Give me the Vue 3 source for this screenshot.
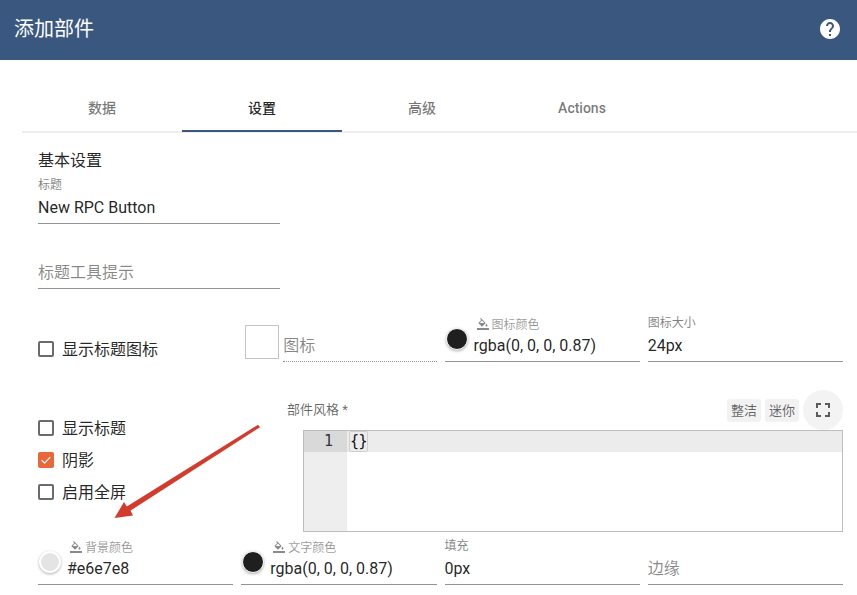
<script setup>
const fillPath = 'M16.56 8.94L7.62 0 6.21 1.41l2.38 2.38-5.15 5.15c-.59.59-.59 1.54 0 2.12l5.5 5.5c.29.29.68.44 1.06.44s.77-.15 1.06-.44l5.5-5.5c.59-.58.59-1.53 0-2.12zM5.21 10L10 5.21 14.79 10H5.21zM19 11.5s-2 2.17-2 3.5c0 1.1.9 2 2 2s2-.9 2-2c0-1.33-2-3.5-2-3.5zM0 20h24v4H0z'
const tabs = ['数据', '设置', '高级', 'Actions']
const checks = [
  { text: '显示标题', on: false },
  { text: '阴影', on: true },
  { text: '启用全屏', on: false }
]
</script>

<template>
  <div class="page">
    <header class="bar">
      <h1>添加部件</h1>
      <svg class="help" viewBox="0 0 24 24" width="24" height="24"><path fill="#fff" d="M12 2C6.48 2 2 6.48 2 12s4.48 10 10 10 10-4.48 10-10S17.52 2 12 2zm1 17h-2v-2h2v2zm2.07-7.75l-.9.92C13.45 12.9 13 13.5 13 15h-2v-.5c0-1.1.45-2.1 1.17-2.83l1.24-1.26c.37-.36.59-.86.59-1.41 0-1.1-.9-2-2-2s-2 .9-2 2H8c0-2.21 1.79-4 4-4s4 1.79 4 4c0 .88-.36 1.68-.93 2.25z"/></svg>
    </header>

    <nav class="tabs">
      <div v-for="(t, i) in tabs" :key="t" class="tab" :class="{ active: i === 1, latin: t === 'Actions' }">{{ t }}</div>
    </nav>

    <main class="content">
      <div class="section-title">基本设置</div>

      <div class="field narrow">
        <label class="lab">标题</label>
        <div class="val">New RPC Button</div>
      </div>
      <div class="field narrow second">
        <div class="val ph">标题工具提示</div>
      </div>

      <div class="grid row3">
        <div class="check icon-check"><span class="box"></span><span class="check-text">显示标题图标</span></div>
        <div class="icon-field">
          <div class="icon-box"></div>
          <div class="field dotted"><div class="val ph">图标</div></div>
        </div>
        <div class="field color">
          <span class="swatch dark"></span>
          <label class="lab color-lab"><svg viewBox="0 0 24 24" width="12" height="12"><path fill="#8a8a8a" :d="fillPath"/></svg>图标颜色</label>
          <div class="val">rgba(0, 0, 0, 0.87)</div>
        </div>
        <div class="field">
          <label class="lab">图标大小</label>
          <div class="val">24px</div>
        </div>
      </div>

      <div class="row4">
        <div class="checks">
          <div v-for="c in checks" :key="c.text" class="check">
            <span class="box" :class="{ on: c.on }">
              <svg v-if="c.on" viewBox="0 0 16 16" width="16" height="16"><path d="M3.6 8.2l3 3 5.6-6" fill="none" stroke="#fff" stroke-width="1.2"/></svg>
            </span>
            <span class="check-text">{{ c.text }}</span>
          </div>
        </div>
        <div class="css-panel">
          <div class="panel-head">
            <span class="panel-label">部件风格 *</span>
            <span class="mini">整洁</span>
            <span class="mini">迷你</span>
            <span class="round">
              <svg viewBox="0 0 24 24" width="24" height="24"><path fill="#5c5c5c" d="M7 14H5v5h5v-2H7v-3zm-2-4h2V7h3V5H5v5zm12 7h-3v2h5v-5h-2v3zM14 5v2h3v3h2V5h-5z"/></svg>
            </span>
          </div>
          <div class="editor">
            <div class="gutter"><div class="g-line">1</div></div>
            <div class="code"><div class="c-line"><span class="bracket">{}</span></div></div>
          </div>
        </div>
      </div>

      <div class="grid row5">
        <div class="field color">
          <span class="swatch light"></span>
          <label class="lab color-lab"><svg viewBox="0 0 24 24" width="12" height="12"><path fill="#8a8a8a" :d="fillPath"/></svg>背景颜色</label>
          <div class="val">#e6e7e8</div>
        </div>
        <div class="field color">
          <span class="swatch dark"></span>
          <label class="lab color-lab"><svg viewBox="0 0 24 24" width="12" height="12"><path fill="#8a8a8a" :d="fillPath"/></svg>文字颜色</label>
          <div class="val">rgba(0, 0, 0, 0.87)</div>
        </div>
        <div class="field">
          <label class="lab">填充</label>
          <div class="val">0px</div>
        </div>
        <div class="field">
          <div class="val ph">边缘</div>
        </div>
      </div>
    </main>

    <svg class="arrow" viewBox="0 0 857 595" width="857" height="595">
      <polygon fill="#d33b2c" points="258,424.8 260,427.2 130.5,510.6 133,515.5 114.5,518 124,502 126.8,506.4"/>
    </svg>
  </div>
</template>

<style scoped>
.page {
  position: relative;
  width: 857px;
  height: 595px;
  overflow: hidden;
  background: #fff;
  color: rgba(0, 0, 0, 0.87);
  font-family: Roboto, "Noto Sans CJK SC", sans-serif;
  font-size: 16px;
}
.bar {
  height: 60px;
  background: #3a5780;
  color: #fff;
  display: flex;
  align-items: center;
  justify-content: space-between;
  padding: 0 15px 2px 14px;
  box-sizing: border-box;
}
.bar h1 {
  margin: 0;
  font-size: 20px;
  font-weight: 400;
  line-height: 28px;
}
.help { display: block; }
.tabs {
  display: flex;
  margin: 24px 0 0 22px;
  height: 49px;
  box-sizing: border-box;
  border-bottom: 2px solid #eee;
}
.tab {
  width: 160px;
  height: 48px;
  flex: none;
  box-sizing: border-box;
  padding-bottom: 2px;
  display: flex;
  align-items: center;
  justify-content: center;
  font-size: 14px;
  font-weight: 500;
  color: rgba(0, 0, 0, 0.54);
}
.tab.latin { padding-bottom: 0; }
.tab.active {
  color: rgba(0, 0, 0, 0.87);
  border-bottom: 2px solid #3a5780;
  padding-bottom: 0;
}
.content { padding: 15px 14px 0 38px; }
.section-title { font-size: 16px; line-height: 26px; height: 24px; margin-bottom: 5px; }
.field {
  position: relative;
  display: flex;
  flex-direction: column;
  border-bottom: 1px solid #939393;
  padding-bottom: 4px;
  min-width: 0;
}
.narrow { width: 242px; }
.second { margin-top: 36px; }
.lab {
  font-size: 12px;
  line-height: 16px;
  height: 14px;
  margin-bottom: 4px;
  color: rgba(0, 0, 0, 0.5);
}
.val { font-size: 16px; line-height: 26px; height: 24px; white-space: nowrap; }
.val.ph { color: rgba(0, 0, 0, 0.48); }
.grid {
  display: grid;
  grid-template-columns: repeat(4, 1fr);
  column-gap: 8px;
  align-items: end;
}
.row3 { margin-top: 26px; }
.row5 { margin-top: 6px; }
.check {
  display: flex;
  align-items: center;
  gap: 8px;
  height: 32px;
  font-size: 16px;
}
.check-text { padding-bottom: 2px; }
.icon-check { height: 24px; margin-bottom: 1px; }
.box {
  width: 16px;
  height: 16px;
  box-sizing: border-box;
  border: 2px solid #6b6b6b;
  border-radius: 2px;
  flex: none;
  display: block;
}
.box.on {
  background: #e8683c;
  border: 0;
}
.box svg { display: block; }
.icon-field { display: flex; align-items: flex-end; }
.icon-box {
  width: 34px;
  height: 34px;
  box-sizing: border-box;
  border: 1px solid #c4c4c4;
  margin: 0 4px 3px 4px;
  flex: none;
}
.dotted { flex: 1; border-bottom: 1px dotted #8f8f8f; }
.color .val { padding-left: 29px; }
.color .lab.color-lab {
  display: flex;
  align-items: center;
  gap: 3px;
  line-height: 16px;
  height: 16px;
  margin-bottom: 0;
  padding-left: 32px;
  color: rgba(0, 0, 0, 0.42);
}
.color-lab svg { display: block; flex: none; margin-bottom: 3px; }
.swatch {
  position: absolute;
  left: 1px;
  bottom: 11px;
  width: 22px;
  height: 22px;
  box-sizing: border-box;
  border-radius: 50%;
  border: 1px solid #fff;
  box-shadow: 0 1px 3px rgba(0, 0, 0, 0.32);
}
.swatch.dark { background: #1f1f1f; }
.swatch.light { background: #e3e4e6; border-width: 2px; }
.row4 { display: flex; margin-top: 28px; height: 142px; }
.checks { width: 249px; flex: none; padding-top: 22px; }
.css-panel { flex: 1; min-width: 0; }
.panel-head {
  height: 40px;
  display: flex;
  align-items: center;
  gap: 4px;
}
.panel-label {
  font-size: 13px;
  margin-right: auto;
  padding-bottom: 4px;
  color: rgba(0, 0, 0, 0.6);
}
.mini {
  width: 34px;
  height: 23px;
  line-height: 24px;
  text-align: center;
  font-size: 13px;
  background: #f2f2f2;
  border-radius: 3px;
  color: rgba(0, 0, 0, 0.6);
}
.round {
  width: 40px;
  height: 40px;
  border-radius: 50%;
  background: #f3f3f3;
  display: flex;
  align-items: center;
  justify-content: center;
}
.editor {
  margin-left: 16px;
  height: 102px;
  box-sizing: border-box;
  border: 1px solid #bdbdbd;
  display: flex;
  font-family: "DejaVu Sans Mono", monospace;
  font-size: 15px;
}
.gutter { width: 43px; flex: none; background: #eee; }
.g-line {
  height: 21px;
  line-height: 21px;
  background: #d9d9d9;
  text-align: right;
  padding-right: 14px;
  color: #333;
}
.code { flex: 1; }
.c-line {
  height: 21px;
  line-height: 21px;
  background: #ececec;
  padding-left: 2px;
  color: #111;
}
.bracket {
  display: inline-block;
  height: 21px;
  padding: 0 1px;
  letter-spacing: -0.6px;
  box-shadow: inset 0 0 0 1px #cfcfcf;
  border-radius: 2px;
}
.arrow {
  position: absolute;
  left: 0;
  top: 0;
  pointer-events: none;
}
</style>
